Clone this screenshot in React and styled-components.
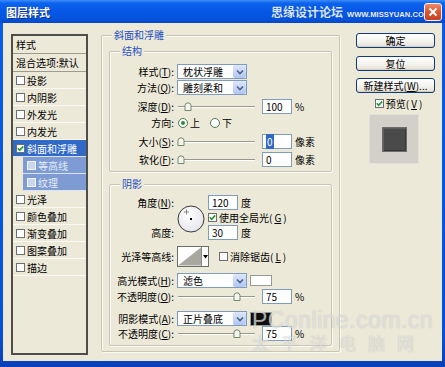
import React from 'react';
import styled, { createGlobalStyle } from 'styled-components';

const GlobalStyle = createGlobalStyle`
  html, body { margin: 0; padding: 0; background: #ECE9D8; }
  body { font-family: "Noto Sans CJK SC", "Noto Sans", sans-serif; font-size: 10px; color: #000; }
  * { box-sizing: border-box; }
`;

const Window = styled.div`
  position: relative;
  width: 445px;
  height: 367px;
  display: flex;
  flex-direction: column;
  background: linear-gradient(180deg, #0A5CE6 0%, #0552DA 90%, #0A3FB8 100%);
  overflow: hidden;
`;

const TitleBar = styled.div`
  position: relative;
  flex: none;
  height: 23px;
  display: flex;
  align-items: center;
  padding: 0 3px 0 6px;
  background: linear-gradient(180deg, #3E8DF7 0%, #0B63EE 14%, #0658E6 45%, #0454DF 80%, #0747C6 100%);
`;

const Title = styled.span`
  flex: 1;
  color: #fff;
  font-weight: bold;
  font-size: 11px;
  text-shadow: 1px 1px 0 #0B2E86;
`;

const SiteMark = styled.div`
  position: absolute;
  left: 271px;
  top: 3px;
  display: flex;
  align-items: baseline;
  gap: 4px;
  white-space: nowrap;
  pointer-events: none;
`;

const SiteName = styled.span`
  font-size: 12px;
  font-weight: bold;
  color: #D5E5FF;
  text-shadow: 0 0 1px #0A3CA8;
`;

const SiteUrl = styled.span`
  font-family: "Liberation Sans", sans-serif;
  font-size: 7.6px;
  font-weight: bold;
  color: #EAF1FF;
  text-shadow: 0 0 1px #0A3CA8;
`;

const CloseBtn = styled.div`
  position: relative;
  flex: none;
  width: 18px;
  height: 18px;
  border: 1px solid #F4F4F4;
  border-radius: 3px;
  background: linear-gradient(180deg, #EE8B6A 0%, #DE5A35 45%, #C4401E 100%);
  display: flex;
  align-items: center;
  justify-content: center;
`;

const Body = styled.div`
  flex: 1;
  margin: 0 3px 6px;
  background: #ECE9D8;
  display: flex;
  align-items: flex-start;
  padding: 10px 0 0 8px;
`;

/* ---------- left list ---------- */
const List = styled.div`
  flex: none;
  width: 77px;
  height: 321px;
  margin-top: 1px;
  border: 2px solid #4E4E4A;
  background: #ECE9D8;
  display: flex;
  flex-direction: column;
`;

const ListHead = styled.div`
  height: 18px;
  flex: none;
  display: flex;
  align-items: center;
  padding-left: 3px;
  border-bottom: 1px solid #9D9B8F;
  white-space: nowrap;
`;

const ListRow = styled.div`
  height: 17px;
  flex: none;
  display: flex;
  align-items: center;
  gap: 2px;
  white-space: nowrap;
  padding-left: ${p => (p.$sub ? 4 : 3)}px;
  margin-left: ${p => (p.$sub ? 10 : 0)}px;
  background: ${p => (p.$selected ? '#3169C6' : p.$sub ? '#7E9BD4' : 'transparent')};
  color: ${p => (p.$selected ? '#fff' : p.$sub ? '#E4EBF8' : '#000')};
  border-bottom: 1px solid ${p => (p.$selected || p.$sub ? '#DCE4F4' : '#FAF9F4')};
`;

const Box = styled.span`
  flex: none;
  width: 9px;
  height: 9px;
  border: 1px solid ${p => (p.$light ? '#F2F5FB' : '#6B6E74')};
  background: ${p => (p.$light ? '#C9D6F0' : '#fff')};
  display: inline-flex;
  align-items: center;
  justify-content: center;
`;

const Check = ({ checked, light }) => (
  <Box $light={light}>
    {checked && (
      <svg width="7" height="7" viewBox="0 0 7 7">
        <polyline points="0.8,3.3 2.7,5.3 6.2,1.4" fill="none" stroke="#1F9A2C" strokeWidth="1.6" />
      </svg>
    )}
  </Box>
);

/* ---------- groups ---------- */
const OuterGroup = styled.div`
  position: relative;
  flex: none;
  width: 239px;
  height: 317px;
  margin: 2px 0 0 13px;
  padding: 15px 7px 0;
  border: 1px solid #C9C6B6;
  border-radius: 2px;
  box-shadow: inset 1px 1px 0 #FAFAF6, 1px 1px 0 #FAFAF6;
`;

const Group = styled.div`
  position: relative;
  height: ${p => p.$h}px;
  margin-top: ${p => p.$mt || 0}px;
  padding-top: ${p => p.$pt}px;
  border: 1px solid #C9C6B6;
  border-radius: 2px;
  box-shadow: inset 1px 1px 0 #FAFAF6, 1px 1px 0 #FAFAF6;
`;

const Legend = styled.span`
  position: absolute;
  top: -8px;
  left: ${p => p.$left}px;
  padding: 0 2px;
  background: #ECE9D8;
  color: #1F4FC4;
  line-height: 14px;
  white-space: nowrap;
`;

const Row = styled.div`
  display: flex;
  align-items: center;
  height: ${p => p.$h || 15}px;
  margin-top: ${p => p.$mt || 0}px;
  white-space: nowrap;
`;

const Label = styled.span`
  flex: none;
  width: 64px;
  margin-right: 3px;
  text-align: right;
  white-space: nowrap;
`;

const Select = styled.div`
  flex: none;
  width: 70px;
  height: 15px;
  margin-right: 3px;
  border: 1px solid #7F9DB9;
  background: #fff;
  display: flex;
  align-items: center;
`;

const SelectText = styled.span`
  flex: 1;
  padding-left: 5px;
`;

const SelectArrow = styled.span`
  flex: none;
  width: 13px;
  height: 13px;
  border-radius: 2px;
  background: linear-gradient(180deg, #DCE6FC 0%, #C3D4F8 60%, #AFC5F4 100%);
  display: flex;
  align-items: center;
  justify-content: center;
`;

const Dropdown = ({ children }) => (
  <Select>
    <SelectText>{children}</SelectText>
    <SelectArrow>
      <svg width="8" height="6" viewBox="0 0 8 6">
        <polyline points="1,1.5 4,4.5 7,1.5" fill="none" stroke="#4D6185" strokeWidth="1.6" />
      </svg>
    </SelectArrow>
  </Select>
);

const Input = styled.div`
  flex: none;
  width: 30px;
  height: 15px;
  border: 1px solid #7F9DB9;
  background: #fff;
  padding-left: 3px;
  display: flex;
  align-items: center;
  margin-right: 3px;
`;

const Selected = styled.span`
  background: #316AC5;
  color: #fff;
  padding: 0 1px;
`;

const Unit = styled.span`
  flex: none;
`;

const Swatch = styled.span`
  flex: none;
  width: 22px;
  height: ${p => p.$h}px;
  border: 1px solid #9A9A94;
  background: ${p => p.$color};
`;

const SliderTrack = styled.div`
  position: relative;
  flex: none;
  width: 78px;
  height: 15px;
  margin-right: 7px;
  &::before {
    content: '';
    position: absolute;
    left: 1px;
    right: 0;
    top: 7px;
    height: 1px;
    background: #9A988C;
    box-shadow: 0 1px 0 #FFFFFF;
  }
`;

const ThumbSvg = styled.svg`
  position: absolute;
  top: 3px;
`;

const Slider = ({ value }) => (
  <SliderTrack>
    <ThumbSvg style={{ left: Math.round(value * 74) }} width="8" height="9" viewBox="0 0 8 9">
      <path d="M1 8.5 V3.5 Q1 1 4 0.8 Q7 1 7 3.5 V8.5 Z" fill="#F6F6EE" stroke="#6E8A72" strokeWidth="1" />
    </ThumbSvg>
  </SliderTrack>
);

const RadioWrap = styled.span`
  display: inline-flex;
  align-items: center;
  gap: 2px;
  margin-left: ${p => p.$ml}px;
`;

const RadioCircle = styled.span`
  width: 10px;
  height: 10px;
  border-radius: 50%;
  border: 1px solid #4C7A56;
  background: #fff;
  display: inline-flex;
  align-items: center;
  justify-content: center;
  &::after {
    content: '';
    width: 4px;
    height: 4px;
    border-radius: 50%;
    background: ${p => (p.$on ? '#2E8B3A' : 'transparent')};
  }
`;

const CheckLabel = styled.span`
  display: inline-flex;
  align-items: center;
  gap: 2px;
  margin-left: ${p => p.$ml || 0}px;
  white-space: nowrap;
`;

/* ---------- angle block ---------- */
const AngleGrid = styled.div`
  display: grid;
  grid-template-columns: 67px 31px 1fr;
  grid-template-rows: 15px 15px 15px;
  margin-top: 10px;
  align-items: center;
`;

const GridLabel = styled.span`
  grid-column: 1;
  grid-row: ${p => p.$row};
  text-align: right;
  padding-right: 3px;
  white-space: nowrap;
`;

const GridCell = styled.div`
  grid-column: 3;
  grid-row: ${p => p.$row};
  display: flex;
  align-items: center;
  height: 15px;
`;

const Dial = styled.svg`
  grid-column: 2;
  grid-row: 1 / 4;
  align-self: center;
  margin-top: 2px;
`;

const ContourPicker = styled.div`
  flex: none;
  width: 32px;
  height: 21px;
  display: flex;
  border: 1px solid #6E6E68;
  background: #fff;
`;

const ContourGraph = styled.svg`
  flex: none;
  border-right: 1px solid #8C8C86;
`;

const ContourArrow = styled.span`
  flex: 1;
  display: flex;
  align-items: center;
  justify-content: center;
`;

/* ---------- right column ---------- */
const Side = styled.div`
  flex: none;
  width: 79px;
  margin-left: 16px;
  display: flex;
  flex-direction: column;
  align-items: center;
`;

const Button = styled.div`
  width: 79px;
  height: 15px;
  margin-top: ${p => p.$mt || 0}px;
  border: 1px solid #12397A;
  border-radius: 3px;
  background: linear-gradient(180deg, #FFFFFF 0%, #F4F3EE 55%, #E3E0D4 100%);
  box-shadow: inset 0 -1px 0 #D6D0C0, inset 0 1px 0 #FFF;
  display: flex;
  align-items: center;
  justify-content: center;
  white-space: nowrap;
`;

const PreviewCheck = styled.div`
  margin-top: 4px;
  height: 12px;
  display: flex;
  align-items: center;
  gap: 2px;
  padding-left: 6px;
`;

const PreviewBox = styled.div`
  margin-top: 5px;
  margin-left: -3px;
  width: 50px;
  height: 50px;
  background: #D3D0CA;
  border: 1px solid #E2E0DA;
  display: flex;
  align-items: center;
  justify-content: center;
`;

const PreviewSquare = styled.div`
  width: 25px;
  height: 25px;
  background: #4A4A4A;
  border: 1px solid #6C6C6C;
  box-shadow: inset 1px 1px 0 #5E5E5E, inset -1px -1px 0 #383838;
`;

/* ---------- watermark ---------- */
const Watermark = styled.div`
  position: absolute;
  left: 252px;
  top: 309px;
  pointer-events: none;
  display: flex;
  flex-direction: column;
  line-height: 1;
  white-space: nowrap;
  color: rgba(255, 255, 255, 0.58);
  text-shadow: 0 0 1px rgba(120, 120, 120, 0.5);
`;

const WmLatin = styled.span`
  font-family: "Liberation Sans", sans-serif;
  font-size: 23px;
  letter-spacing: 0.5px;
`;

const WmCjk = styled.span`
  font-size: 17px;
  letter-spacing: 12px;
  margin-top: 2px;
`;

const items = [
  { label: '投影' },
  { label: '内阴影' },
  { label: '外发光' },
  { label: '内发光' },
  { label: '斜面和浮雕', checked: true, selected: true },
  { label: '等高线', sub: true },
  { label: '纹理', sub: true },
  { label: '光泽' },
  { label: '颜色叠加' },
  { label: '渐变叠加' },
  { label: '图案叠加' },
  { label: '描边' },
];

export default function App() {
  return (
    <>
      <GlobalStyle />
      <Window>
        <TitleBar>
          <Title>图层样式</Title>
          <SiteMark>
            <SiteName>思缘设计论坛</SiteName>
            <SiteUrl>WWW.MISSYUAN.COM</SiteUrl>
          </SiteMark>
          <CloseBtn>
            <svg width="10" height="10" viewBox="0 0 10 10">
              <path d="M1.5 1.5 L8.5 8.5 M8.5 1.5 L1.5 8.5" stroke="#fff" strokeWidth="2" />
            </svg>
          </CloseBtn>
        </TitleBar>

        <Body>
          <List>
            <ListHead>样式</ListHead>
            <ListHead>混合选项:默认</ListHead>
            {items.map(it => (
              <ListRow key={it.label} $sub={it.sub} $selected={it.selected}>
                <Check checked={it.checked} light={it.sub} />
                {it.label}
              </ListRow>
            ))}
          </List>

          <OuterGroup>
            <Legend $left={10}>斜面和浮雕</Legend>

            <Group $h={121} $pt={12}>
              <Legend $left={10}>结构</Legend>
              <Row>
                <Label>样式(<u>T</u>):</Label>
                <Dropdown>枕状浮雕</Dropdown>
              </Row>
              <Row $mt={1}>
                <Label>方法(<u>Q</u>):</Label>
                <Dropdown>雕刻柔和</Dropdown>
              </Row>
              <Row $mt={4}>
                <Label>深度(<u>D</u>):</Label>
                <Slider value={0.1} />
                <Input>100</Input>
                <Unit>%</Unit>
              </Row>
              <Row $mt={1}>
                <Label>方向:</Label>
                <RadioWrap $ml={1}>
                  <RadioCircle $on />上
                </RadioWrap>
                <RadioWrap $ml={10}>
                  <RadioCircle />下
                </RadioWrap>
              </Row>
              <Row $mt={4}>
                <Label>大小(<u>S</u>):</Label>
                <Slider value={0} />
                <Input><Selected>0</Selected></Input>
                <Unit>像素</Unit>
              </Row>
              <Row $mt={3}>
                <Label>软化(<u>F</u>):</Label>
                <Slider value={0} />
                <Input>0</Input>
                <Unit>像素</Unit>
              </Row>
            </Group>

            <Group $h={162} $pt={0} $mt={12}>
              <Legend $left={10}>阴影</Legend>
              <AngleGrid>
                <GridLabel $row={1}>角度(<u>N</u>):</GridLabel>
                <Dial width="28" height="28" viewBox="0 0 28 28">
                  <defs>
                    <radialGradient id="dialFill" cx="40%" cy="35%" r="70%">
                      <stop offset="0%" stopColor="#FFFFFF" />
                      <stop offset="100%" stopColor="#E4E4EC" />
                    </radialGradient>
                  </defs>
                  <circle cx="14" cy="14" r="13" fill="url(#dialFill)" stroke="#3A3A3A" strokeWidth="1" />
                  <path d="M9.5 4.5 V9.5 M7 7 H12" stroke="#707070" strokeWidth="0.8" />
                  <rect x="13" y="13" width="2" height="2" fill="#000" />
                </Dial>
                <GridCell $row={1}>
                  <Input>120</Input>
                  <Unit>度</Unit>
                </GridCell>
                <GridCell $row={2}>
                  <CheckLabel>
                    <Check checked />使用全局光(<u>G</u>)
                  </CheckLabel>
                </GridCell>
                <GridLabel $row={3}>高度:</GridLabel>
                <GridCell $row={3}>
                  <Input>30</Input>
                  <Unit>度</Unit>
                </GridCell>
              </AngleGrid>

              <Row $h={21} $mt={6}>
                <Label>光泽等高线:</Label>
                <ContourPicker>
                  <ContourGraph width="24" height="19" viewBox="0 0 24 19">
                    <polygon points="0,19 24,0 24,19" fill="#A9A8A0" />
                  </ContourGraph>
                  <ContourArrow>
                    <svg width="5" height="4" viewBox="0 0 5 4">
                      <polygon points="0,0 5,0 2.5,3.5" fill="#000" />
                    </svg>
                  </ContourArrow>
                </ContourPicker>
                <CheckLabel $ml={10}>
                  <Check />消除锯齿(<u>L</u>)
                </CheckLabel>
              </Row>

              <Row $mt={6}>
                <Label>高光模式(<u>H</u>):</Label>
                <Dropdown>滤色</Dropdown>
                <Swatch $color="#FFFFFF" $h={11} />
              </Row>
              <Row $mt={1}>
                <Label>不透明度(<u>O</u>):</Label>
                <Slider value={0.75} />
                <Input>75</Input>
                <Unit>%</Unit>
              </Row>
              <Row $mt={7}>
                <Label>阴影模式(<u>A</u>):</Label>
                <Dropdown>正片叠底</Dropdown>
                <Swatch $color="#0E0E0E" $h={14} />
              </Row>
              <Row $mt={0}>
                <Label>不透明度(<u>C</u>):</Label>
                <Slider value={0.75} />
                <Input>75</Input>
                <Unit>%</Unit>
              </Row>
            </Group>
          </OuterGroup>

          <Side>
            <Button>确定</Button>
            <Button $mt={8}>复位</Button>
            <Button $mt={7}>新建样式(<u>W</u>)...</Button>
            <PreviewCheck>
              <Check checked />预览(<u>V</u>)
            </PreviewCheck>
            <PreviewBox>
              <PreviewSquare />
            </PreviewBox>
          </Side>
        </Body>

        <Watermark>
          <WmLatin>PConline.com.cn</WmLatin>
          <WmCjk>太平洋电脑网</WmCjk>
        </Watermark>
      </Window>
    </>
  );
}
